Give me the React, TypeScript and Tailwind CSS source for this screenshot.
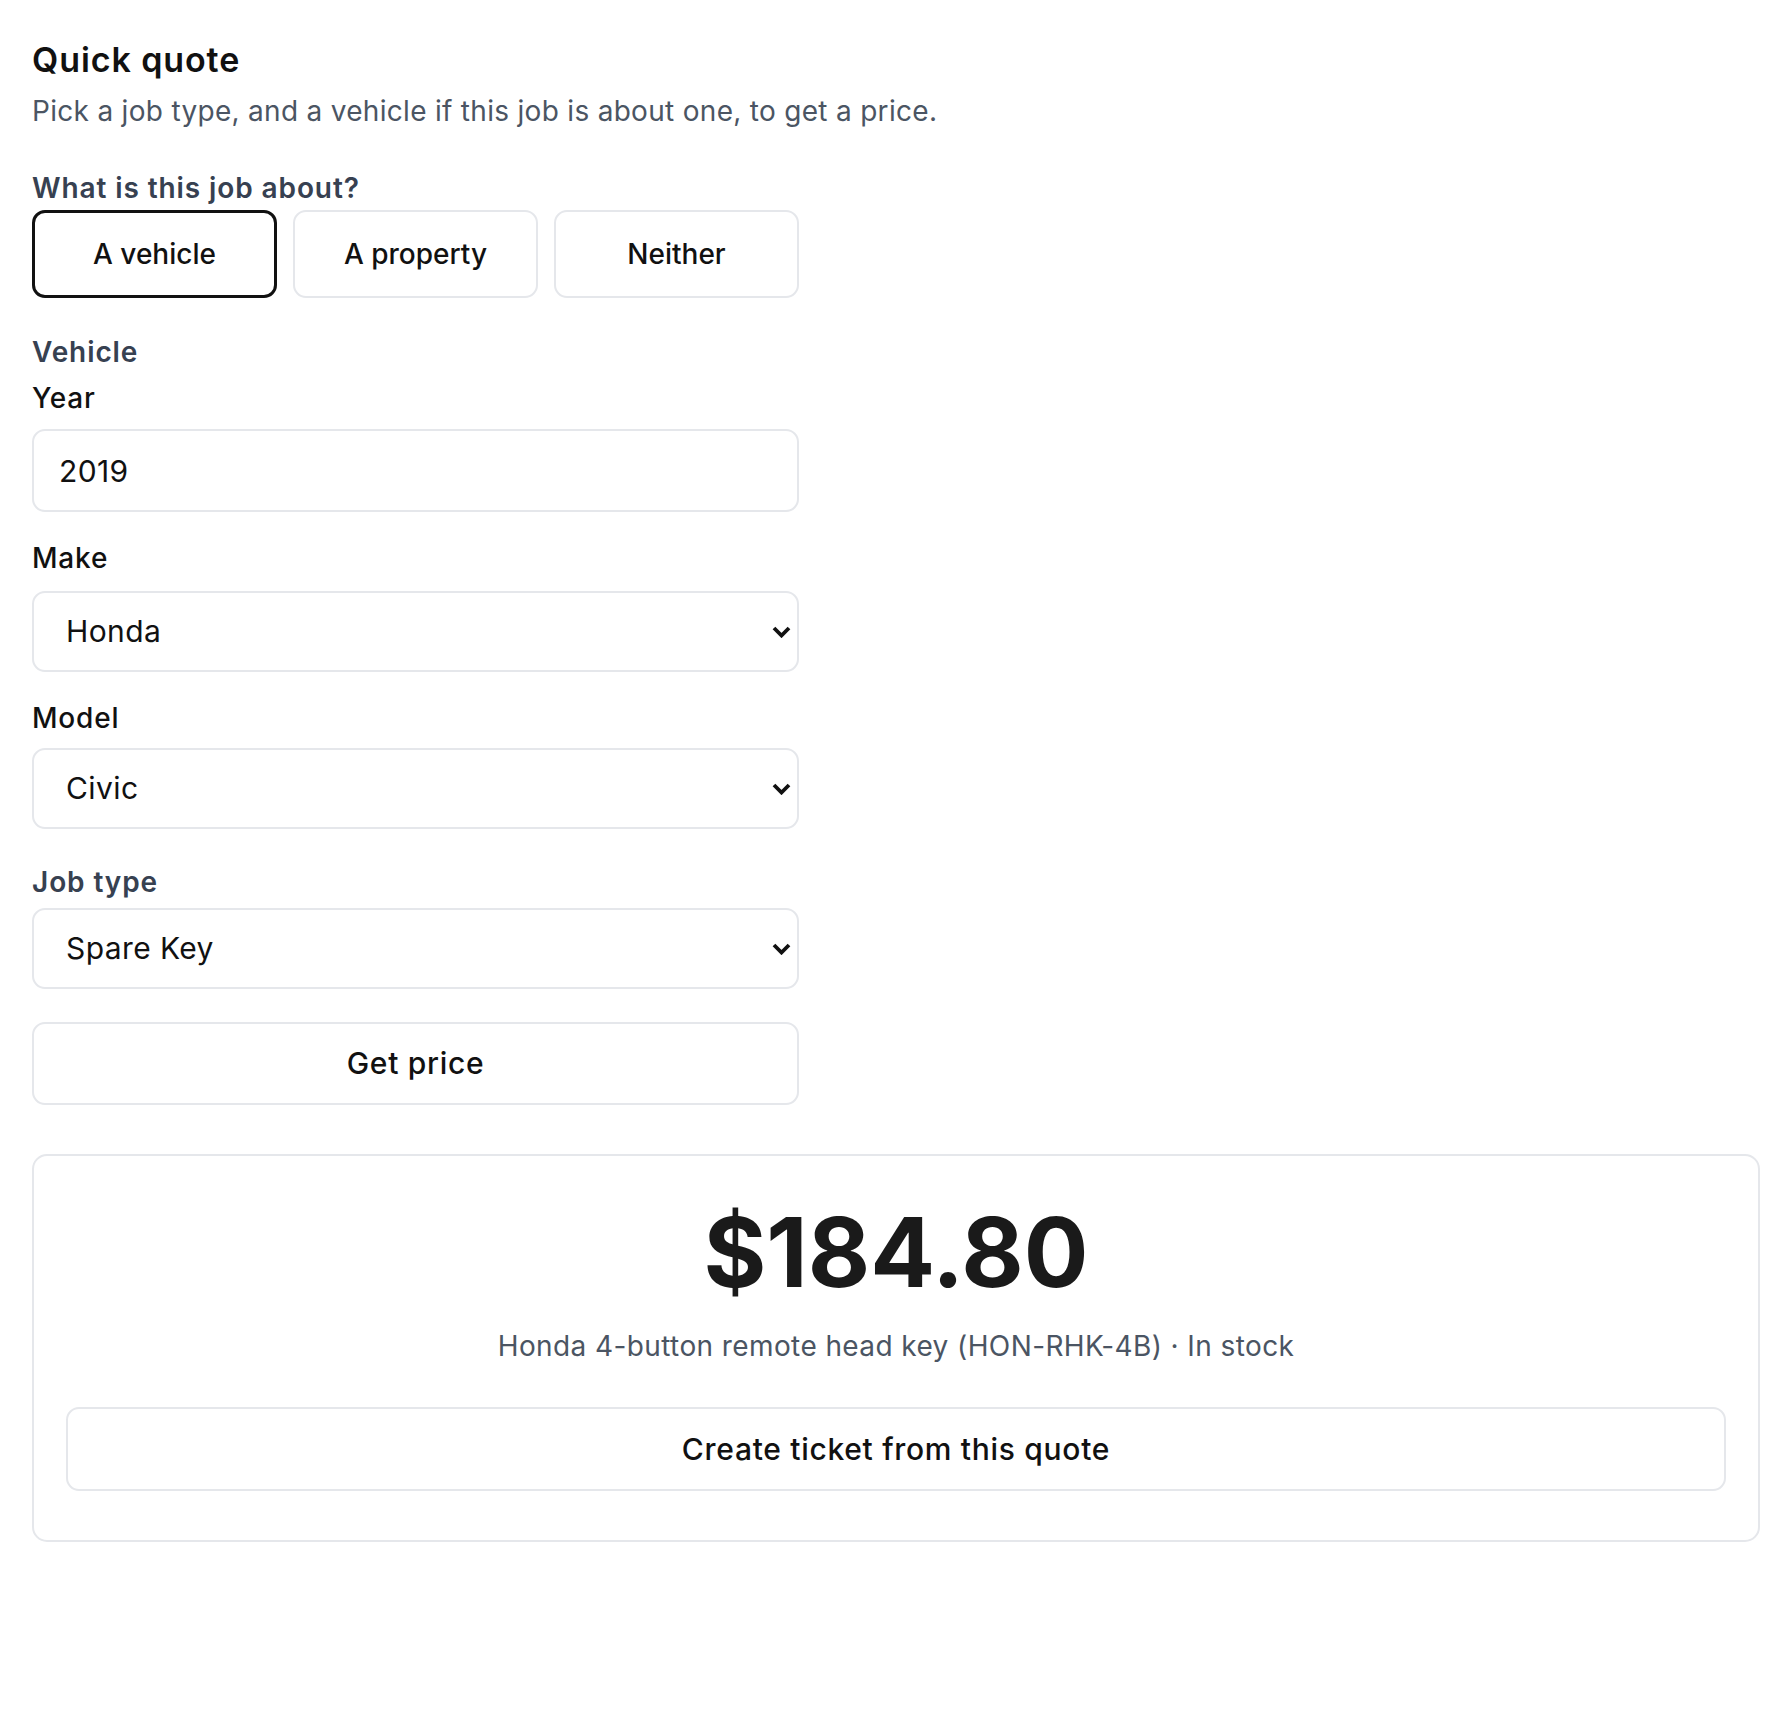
import { useState } from 'react'

const jobKinds = ['A vehicle', 'A property', 'Neither']

const makes = ['Honda', 'Toyota', 'Ford', 'Nissan']
const models = ['Civic', 'Accord', 'CR-V', 'Pilot']
const jobTypes = ['Spare Key', 'All Keys Lost', 'Lockout', 'Ignition Repair']

function Chevron() {
  return (
    <svg
      className="pointer-events-none absolute right-[8px] top-1/2 h-[12px] w-[19px] -translate-y-1/2"
      viewBox="0 0 19 12"
      fill="none"
      stroke="#111111"
      strokeWidth="3.8"
      strokeLinecap="butt"
      strokeLinejoin="miter"
    >
      <polyline points="2,2 9.5,9.5 17,2" />
    </svg>
  )
}

function Select({ value, options }: { value: string; options: string[] }) {
  return (
    <div className="relative">
      <select
        defaultValue={value}
        className="block h-[81px] w-full appearance-none rounded-[13px] border-2 border-[#e5e7eb] bg-white pl-[32px] pr-[48px] text-[30px] tracking-[0.4px] text-[#111111] outline-none"
      >
        {options.map((o) => (
          <option key={o}>{o}</option>
        ))}
      </select>
      <Chevron />
    </div>
  )
}

export default function App() {
  const [kind, setKind] = useState('A vehicle')

  return (
    <div className="min-h-screen bg-white px-[32px] pt-[40px] pb-[60px] font-['Inter',sans-serif] text-[#111111]">
      <h1 className="text-[34px] font-semibold leading-[40px] tracking-[0.9px]">Quick quote</h1>
      <p className="mt-[13px] text-[28px] leading-[36px] tracking-[0.3px] text-[#4b5563]">
        Pick a job type, and a vehicle if this job is about one, to get a price.
      </p>

      <div className="w-[767px]">
        {/* job subject */}
        <div className="mt-[41px] text-[28px] font-semibold leading-[36px] tracking-[0.9px] text-[#374151]">
          What is this job about?
        </div>
        <div className="mt-[4px] grid grid-cols-3 gap-[16px]">
          {jobKinds.map((k) => (
            <button
              key={k}
              onClick={() => setKind(k)}
              className={
                k === kind
                  ? 'flex h-[88px] items-center justify-center rounded-[13px] border-[3px] border-[#111111] bg-white text-[28px] font-medium text-[#111111]'
                  : 'flex h-[88px] items-center justify-center rounded-[13px] border-2 border-[#e5e7eb] bg-white text-[28px] font-medium text-[#111111]'
              }
            >
              {k}
            </button>
          ))}
        </div>

        {/* vehicle fields */}
        <div className="mt-[36px] text-[28px] font-semibold leading-[36px] tracking-[0.9px] text-[#374151]">
          Vehicle
        </div>
        <label className="mt-[10px] block text-[28px] font-medium leading-[36px] tracking-[0.8px]">Year</label>
        <input
          defaultValue="2019"
          className="mt-[13px] block h-[83px] w-full rounded-[13px] border-2 border-[#e5e7eb] bg-white px-[25px] text-[30px] tracking-[0.4px] text-[#111111] outline-none"
        />

        <label className="mt-[28px] block text-[28px] font-medium leading-[36px] tracking-[0.8px]">Make</label>
        <div className="mt-[15px]">
          <Select value="Honda" options={makes} />
        </div>

        <label className="mt-[28px] block text-[28px] font-medium leading-[36px] tracking-[0.8px]">Model</label>
        <div className="mt-[12px]">
          <Select value="Civic" options={models} />
        </div>

        {/* job type */}
        <div className="mt-[35px] text-[28px] font-semibold leading-[36px] tracking-[0.9px] text-[#374151]">
          Job type
        </div>
        <div className="mt-[8px]">
          <Select value="Spare Key" options={jobTypes} />
        </div>

        <button className="mt-[33px] flex h-[83px] w-full items-center justify-center rounded-[13px] border-2 border-[#e5e7eb] bg-white text-[30px] font-medium tracking-[0.7px] text-[#111111]">
          Get price
        </button>
      </div>

      {/* result */}
      <div className="mt-[49px] flex flex-col items-center rounded-[15px] border-2 border-[#e5e7eb] px-[32px] pt-[48px] pb-[49px]">
        <div className="text-[96px] font-bold leading-[96px] text-[#1a1a1a]">$184.80</div>
        <div className="mt-[28px] text-[28px] leading-[36px] tracking-[0.4px] text-[#4b5563]">
          Honda 4-button remote head key (HON-RHK-4B) · In stock
        </div>
        <button className="mt-[43px] flex h-[84px] w-full items-center justify-center rounded-[13px] border-2 border-[#e5e7eb] bg-white text-[30px] font-medium tracking-[0.7px] text-[#111111]">
          Create ticket from this quote
        </button>
      </div>
    </div>
  )
}
